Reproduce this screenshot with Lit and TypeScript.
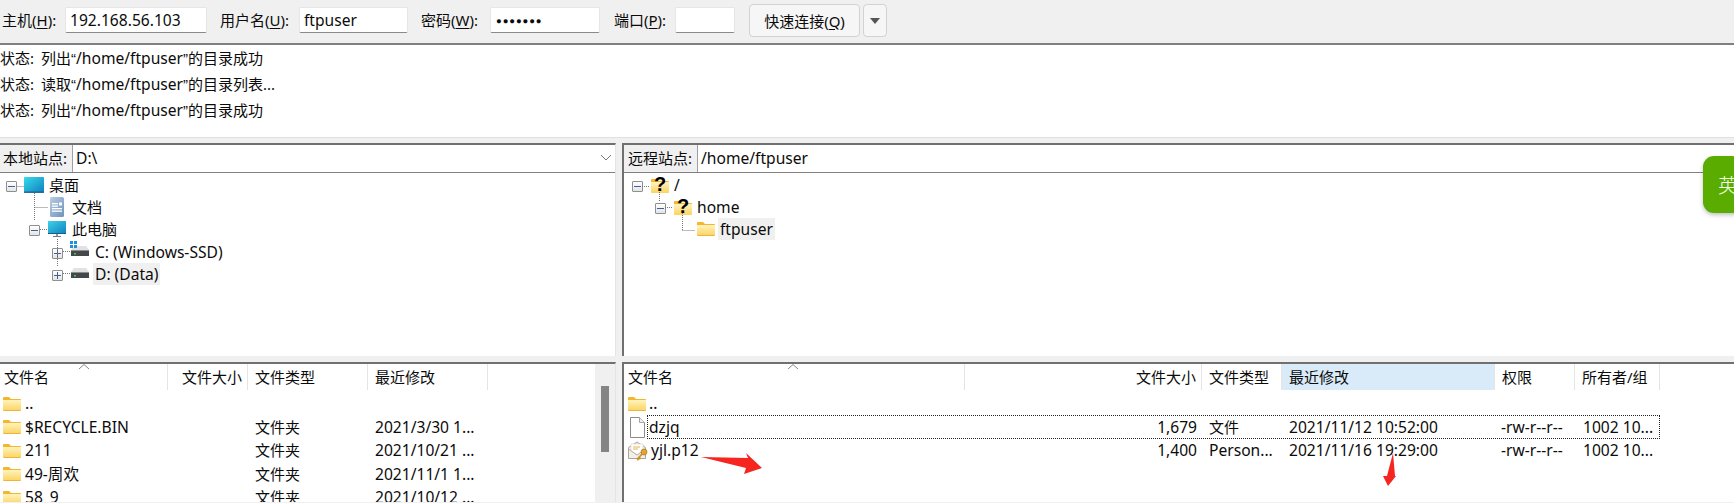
import { LitElement, html, css, svg } from "lit";
import { customElement } from "lit/decorators.js";

const folder = () => html`<svg class="ico" width="18" height="14" viewBox="0 0 18 14">
  <defs><linearGradient id="fg" x1="0" y1="0" x2="0" y2="1"><stop offset="0" stop-color="#fff3bd"/><stop offset="1" stop-color="#fbd35f"/></linearGradient></defs>
  <path d="M0 1.2C0 .5.5 0 1.2 0H6l2 2h9c.6 0 1 .4 1 1v1H0z" fill="#f4b62c"/>
  <path d="M0 3h18v10c0 .6-.4 1-1 1H1c-.6 0-1-.4-1-1z" fill="url(#fg)"/>
  <path d="M.5 13.5h17" stroke="#eeb53c"/></svg>`;

const qfolder = () => html`<svg class="ico over" width="18" height="16" viewBox="0 0 18 16">
  <path d="M0 3.2C0 2.5.5 2 1.2 2H6l2 2h9c.6 0 1 .4 1 1v1H0z" fill="#f4b62c"/>
  <path d="M0 5h18v10c0 .6-.4 1-1 1H1c-.6 0-1-.4-1-1z" fill="url(#fg)"/>
  <text x="9" y="14" text-anchor="middle" class="q">?</text></svg>`;

const desktop = () => html`<svg class="ico" width="20" height="16" viewBox="0 0 20 16">
  <defs><linearGradient id="dg" x1="0" y1="0" x2="1" y2="1"><stop offset="0" stop-color="#36dcea"/><stop offset="1" stop-color="#0f7fc0"/></linearGradient></defs>
  <rect width="20" height="15.5" rx="1" fill="url(#dg)"/><rect y="14.6" width="20" height="1.2" fill="#14548a"/></svg>`;

const monitor = () => html`<svg class="ico" width="18" height="16" viewBox="0 0 18 16">
  <defs><linearGradient id="mg" x1="0" y1="0" x2="1" y2="1"><stop offset="0" stop-color="#3ed3e6"/><stop offset="1" stop-color="#1083c4"/></linearGradient></defs>
  <rect width="18" height="12" fill="url(#mg)"/><rect y="12" width="18" height="1" fill="#1b5d87"/>
  <rect x="8" y="13" width="2" height="2" fill="#8a9aa6"/><rect x="5" y="15" width="8" height="1" fill="#6c7c88"/></svg>`;

const docIcon = () => html`<svg class="ico" width="15" height="20" viewBox="0 0 15 20">
  <defs><linearGradient id="og" x1="0" y1="0" x2="1" y2="1"><stop offset="0" stop-color="#b9cde2"/><stop offset="1" stop-color="#6f94bd"/></linearGradient></defs>
  <rect width="14" height="20" rx="1.5" fill="url(#og)"/>
  <rect x="2" y="6" width="6" height="1.3" fill="#fff"/><rect x="2" y="8.5" width="6" height="1.3" fill="#fff"/>
  <rect x="9" y="5.5" width="3" height="3" fill="#fff"/>
  <rect x="2" y="11" width="10" height="1.3" fill="#fff"/><rect x="2" y="13.5" width="10" height="1.3" fill="#fff"/></svg>`;

const drive = (win: boolean) => html`<svg class="ico over" width="18" height="14" viewBox="0 0 18 14">
  <path d="M3 1h12l3 4H0z" fill="#e2e2e2"/>
  <rect y="5" width="18" height="6" fill="#44484a"/>
  <rect y="5" width="18" height="1" fill="#8a8c8e"/>
  <rect x="3" y="8" width="2" height="1.500" fill="#37d24a"/>
  ${win ? svg`<g fill="#1f8fe0"><rect x="-1" y="-4" width="3" height="3"/><rect x="3" y="-4" width="3" height="3"/><rect x="-1" y="0" width="3" height="3"/><rect x="3" y="0" width="3" height="3"/></g>` : ""}</svg>`;

const fileIcon = () => html`<svg class="ico" width="18" height="21" viewBox="0 0 18 21">
  <path d="M2.500.5h9l5 5v15h-14z" fill="#fff" stroke="#8b8b8b"/><path d="M11.500.5v5h5" fill="#eee" stroke="#a5a5a5"/></svg>`;

const certIcon = () => html`<svg class="ico" width="20" height="20" viewBox="0 0 20 20">
  <path d="M.5 6.500 9 1l8.500 5.500v11H.5z" fill="#f1efe8" stroke="#a9a49a"/>
  <path d="M3 3h12v7l-6 4-6-4z" fill="#fff" stroke="#d3d0c6" stroke-width=".6"/>
  <path d="M5 6h7M5 8h5" stroke="#e6b44a"/>
  <path d="M.5 8 9 14l8.500-6" fill="none" stroke="#b5b0a5"/>
  <circle cx="16" cy="11" r="3" fill="#e4a52d" stroke="#a8741c" stroke-width=".7"/>
  <path d="M14 13l-5 5.500M11 16.500l1.500 1.500M9.500 18l1 1" stroke="#c98e25" stroke-width="1.800" fill="none"/></svg>`;

interface TreeRow { pad: number; exp?: "minus" | "plus"; icon: unknown; label: string; gap: number; sel?: boolean; lat?: boolean; }

const localTree: TreeRow[] = [
  { pad: 6, exp: "minus", icon: desktop(), label: "桌面", gap: 3 },
  { pad: 50, icon: docIcon(), label: "文档", gap: 5 },
  { pad: 29, exp: "minus", icon: monitor(), label: "此电脑", gap: 4 },
  { pad: 52, exp: "plus", icon: drive(true), label: "C: (Windows-SSD)", gap: 4, lat: true },
  { pad: 52, exp: "plus", icon: drive(false), label: "D: (Data)", gap: 4, sel: true, lat: true },
];
const remoteTree: TreeRow[] = [
  { pad: 8, exp: "minus", icon: qfolder(), label: "/", gap: 3, lat: true },
  { pad: 31, exp: "minus", icon: qfolder(), label: "home", gap: 3, lat: true },
  { pad: 73, icon: folder(), label: "ftpuser", gap: 3, sel: true, lat: true },
];

const leftRows = [
  ["..", "", ""],
  ["$RECYCLE.BIN", "文件夹", "2021/3/30 1..."],
  ["211", "文件夹", "2021/10/21 ..."],
  ["49-周欢", "文件夹", "2021/11/1 1..."],
  ["58_9", "文件夹", "2021/10/12 ..."],
];

@customElement("app-root")
export class AppRoot extends LitElement {
  static styles = css`
    :host { display: block; position: relative; width: 1734px; height: 503px; overflow: hidden; background: #f0f0f0; color: #0b0b0b; font: 15px/20px "Noto Sans", "Noto Sans CJK SC", sans-serif; }
    u { text-underline-offset: 2px; }
    .lat { font-size: 15.6px; }
    .qt { font-family: "Liberation Sans", sans-serif; }
    .toolbar { height: 43px; box-sizing: content-box; border-bottom: 2px solid #808080; display: flex; align-items: flex-start; padding-left: 2px; }
    .lab { margin-top: 10px; white-space: nowrap; flex: none; }
    .l-host { width: 63px; }
    .l-user { width: 79px; margin-left: 13px; }
    .l-pass { width: 69px; margin-left: 13px; }
    .l-port { width: 61px; margin-left: 14px; }
    .field { height: 26px; margin-top: 7px; background: #fff; border: 1px solid #e6e6e6; border-bottom-color: #8a8a8a; border-radius: 2px; box-sizing: border-box; padding: 2px 4px; line-height: 21px; white-space: nowrap; flex: none; }
    .host { width: 142px; }
    .user { width: 109px; }
    .pass { width: 110px; font-size: 9.5px; letter-spacing: .9px; font-family: "Liberation Sans", "Noto Sans CJK SC", sans-serif; padding-left: 5px; }
    .port { width: 60px; margin-right: 14px; }
    .btn { margin-top: 4px; height: 33px; background: #f6f6f6; border: 1px solid #d2d2d2; border-radius: 4px; box-sizing: border-box; display: flex; align-items: center; justify-content: center; flex: none; }
    .quick { width: 111px; }
    .drop { width: 24px; margin-left: 3px; }
    .tri { width: 0; height: 0; border: 5.500px solid transparent; border-top: 6px solid #555; border-bottom: 0; }
    .log { height: 93px; background: #fff; box-sizing: border-box; padding-top: 1px; border-bottom: 1px solid #e0e0e0; }
    .log div { height: 26px; line-height: 25px; white-space: pre; display: flex; }
    .log span.st { width: 41px; flex: none; }
    .panes { display: grid; grid-template-columns: 616px 1fr; column-gap: 6px; grid-template-rows: 213px 140px; row-gap: 6px; padding-top: 5px; }
    .panel { background: #fff; border-top: 2px solid #707070; box-sizing: border-box; min-width: 0; overflow: hidden; }
    .right { border-left: 2px solid #707070; }
    .left { border-right: 1px solid #e4e4e4; }
    .site { display: flex; height: 28px; border-bottom: 1px solid #808080; box-sizing: border-box; }
    .site .tag { background: #f0f0f0; padding: 0 5px 0 3px; line-height: 27px; border-right: 1px solid #a0a0a0; flex: none; white-space: nowrap; }
    .right .site .tag { padding: 0 5px 0 4px; }
    .site .path { flex: 1; padding-left: 3px; line-height: 27px; display: flex; justify-content: space-between; }
    .chev { margin: 9px 3px 0 0; }
    .tree { position: relative; padding-top: 1px; }
    .row { height: 22.200px; display: flex; align-items: center; white-space: nowrap; }
    .exp { width: 11px; height: 11px; box-sizing: border-box; border: 1px solid #8f8f8f; background: linear-gradient(#fff, #e4e4e4); border-radius: 1px; flex: none; position: relative; margin: 3px 8px 0 0; }
    .exp.top { margin-right: 7px; }
    .exp::before { content: ""; position: absolute; left: 1px; right: 1px; top: 4px; height: 1px; background: #3f5f9f; }
    .exp.plus::after { content: ""; position: absolute; top: 1px; bottom: 1px; left: 4px; width: 1px; background: #3f5f9f; }
    .ico { flex: none; display: block; }
    .over { overflow: visible; }
    .q { font: bold 20px "Liberation Sans", sans-serif; fill: #000; }
    .label { padding: 0 2px; line-height: 22px; }
    .label.sel { background: #f0f0f0; }
    .links { position: absolute; left: 0; top: 0; width: 400px; height: 130px; pointer-events: none; }
    .cols { display: grid; height: 26px; align-items: stretch; line-height: 26px; }
    .cols > div, .data > div { min-width: 0; white-space: nowrap; }
    .cols > div { border-right: 1px solid #e5e5e5; box-sizing: border-box; padding-left: 7px; }
    .cols > .first { padding-left: 4px; position: relative; }
    .cols > .num, .data > .num { text-align: right; padding: 0 5px 0 0; }
    .cols > .sorted { background: #d9ebf9; }
    .cols > .bare { border-right: 0; }
    .sort { position: absolute; top: -1px; }
    .lcols { grid-template-columns: 168px 80px 120px 120px 1fr; }
    .rcols { grid-template-columns: 341px 237px 80px 213px 80px 85px 1fr; }
    .listwrap { position: relative; height: 138px; display: flex; }
    .listmain { flex: 1; min-width: 0; }
    .rows { padding-top: 2px; }
    .data { display: grid; height: 23.500px; line-height: 23px; align-items: center; font-size: 15.6px; }
    .data .cjk { font-size: 15px; }
    .name { display: flex; align-items: center; padding-left: 3px; gap: 4px; }
    .pl { padding-left: 7px; }
    .scroll { width: 20px; background: #f0f0f0; flex: none; padding: 22px 6px 0; box-sizing: border-box; }
    .thumb { height: 66px; background: #858585; }
    .focus { position: relative; }
    .focus::after { content: ""; position: absolute; left: 23px; top: -1px; right: 0; bottom: 0; border: 1px dotted #222; }
    .rname { padding-left: 4px; gap: 3px; }
    .rcols.data { grid-template-columns: 341px 237px 80px 213px 80px 85px; width: 1036px; }
    .perm { padding-left: 6px; }
    .owner { padding-left: 8px; }
    .ime { position: absolute; left: 1703px; top: 156px; width: 40px; height: 57px; background: #5aac00; border-radius: 11px; box-shadow: 0 2px 4px rgba(0,0,0,.25); color: #f4ffe8; font-size: 20px; line-height: 57px; padding-left: 15px; box-sizing: border-box; font-family: "Noto Sans CJK SC", sans-serif; font-weight: 300; white-space: nowrap; }
    .marks { position: absolute; left: 0; top: 0; width: 1734px; height: 503px; pointer-events: none; }
  `;

  private tree(rows: TreeRow[]) {
    return rows.map(r => html`<div class="row" style="padding-left:${r.pad}px">
      ${r.exp ? html`<span class="exp ${r.exp} ${r.pad === 6 ? "top" : ""}"></span>` : ""}
      ${r.icon}
      <span class="label ${r.sel ? "sel" : ""} ${r.lat ? "lat" : ""}" style="margin-left:${r.gap}px">${r.label}</span></div>`);
  }

  private sortArrow(left: number) {
    return html`<svg class="sort" style="left:${left}px" width="12" height="7" viewBox="0 0 12 7"><path d="M1 6l5-4.500 5 4.500" fill="none" stroke="#8a8a8a"/></svg>`;
  }

  private logLine(head: string, tail: string) {
    return html`<div><span class="st">状态:</span><span>${head}<span class="qt">“</span><span class="lat">/home/ftpuser</span><span class="qt">”</span>${tail}</span></div>`;
  }

  render() {
    return html`
      <div class="toolbar">
        <span class="lab l-host">主机(<u>H</u>):</span>
        <div class="field host lat">192.168.56.103</div>
        <span class="lab l-user">用户名(<u>U</u>):</span>
        <div class="field user lat">ftpuser</div>
        <span class="lab l-pass">密码(<u>W</u>):</span>
        <div class="field pass">●●●●●●●</div>
        <span class="lab l-port">端口(<u>P</u>):</span>
        <div class="field port"></div>
        <div class="btn quick"><span>快速连接(<u>Q</u>)</span></div>
        <div class="btn drop"><span class="tri"></span></div>
      </div>
      <div class="log">
        ${this.logLine("列出", "的目录成功")}
        ${this.logLine("读取", "的目录列表...")}
        ${this.logLine("列出", "的目录成功")}
      </div>
      <div class="panes">
        <section class="panel left">
          <div class="site"><div class="tag">本地站点:</div><div class="path"><span class="lat">D:\\</span>
            <svg class="chev" width="12" height="8" viewBox="0 0 12 8"><path d="M1 1l5 5 5-5" fill="none" stroke="#777"/></svg></div></div>
          <div class="tree">${this.tree(localTree)}
            <svg class="links" viewBox="0 0 400 130"><path d="M17.500 13.500H24M34.500 20v28M34.500 34.500H48M40 56.500h7M57.500 66v28M63 78.500h7M63 100.500h7" fill="none" stroke="#777" stroke-dasharray="1 1"/></svg>
          </div>
        </section>
        <section class="panel right">
          <div class="site"><div class="tag">远程站点:</div><div class="path"><span class="lat">/home/ftpuser</span></div></div>
          <div class="tree">${this.tree(remoteTree)}
            <svg class="links" viewBox="0 0 400 130"><path d="M18 13.500h7M35.500 19v10M41 34.500h7M58.500 40v17M58.500 57.500H71" fill="none" stroke="#777" stroke-dasharray="1 1"/></svg>
          </div>
        </section>
        <section class="panel left">
          <div class="listwrap">
            <div class="listmain">
              <div class="cols lcols"><div class="first">文件名${this.sortArrow(78)}</div><div class="num">文件大小</div><div>文件类型</div><div>最近修改</div><div class="bare"></div></div>
              <div class="rows">${leftRows.map(r => html`<div class="data lcols"><div class="name">${folder()}<span>${r[0]}</span></div><div></div><div class="pl cjk">${r[1]}</div><div class="pl">${r[2]}</div><div></div></div>`)}</div>
            </div>
            <div class="scroll"><div class="thumb"></div></div>
          </div>
        </section>
        <section class="panel right">
          <div class="cols rcols"><div class="first">文件名${this.sortArrow(163)}</div><div class="num">文件大小</div><div>文件类型</div><div class="sorted">最近修改</div><div class="perm">权限</div><div class="owner">所有者/组</div><div class="bare"></div></div>
          <div class="rows">
            <div class="data rcols"><div class="name rname">${folder()}<span>..</span></div></div>
            <div class="data rcols focus"><div class="name rname">${fileIcon()}<span>dzjq</span></div><div class="num">1,679</div><div class="pl cjk">文件</div><div class="pl">2021/11/12 10:52:00</div><div class="perm">-rw-r--r--</div><div class="owner">1002 10...</div></div>
            <div class="data rcols"><div class="name rname">${certIcon()}<span>yjl.p12</span></div><div class="num">1,400</div><div class="pl">Person...</div><div class="pl">2021/11/16 19:29:00</div><div class="perm">-rw-r--r--</div><div class="owner">1002 10...</div></div>
          </div>
        </section>
      </div>
      <div class="ime">英</div>
      <svg class="marks" viewBox="0 0 1734 503">
        <path d="M701 457 748 458 746 453 762 468 744 474 746 468z" fill="#f5261f"/>
        <path d="M1393 453 1395 476 1396 476 1388 486 1383 476 1387 476z" fill="#f5261f"/>
      </svg>
    `;
  }
}
